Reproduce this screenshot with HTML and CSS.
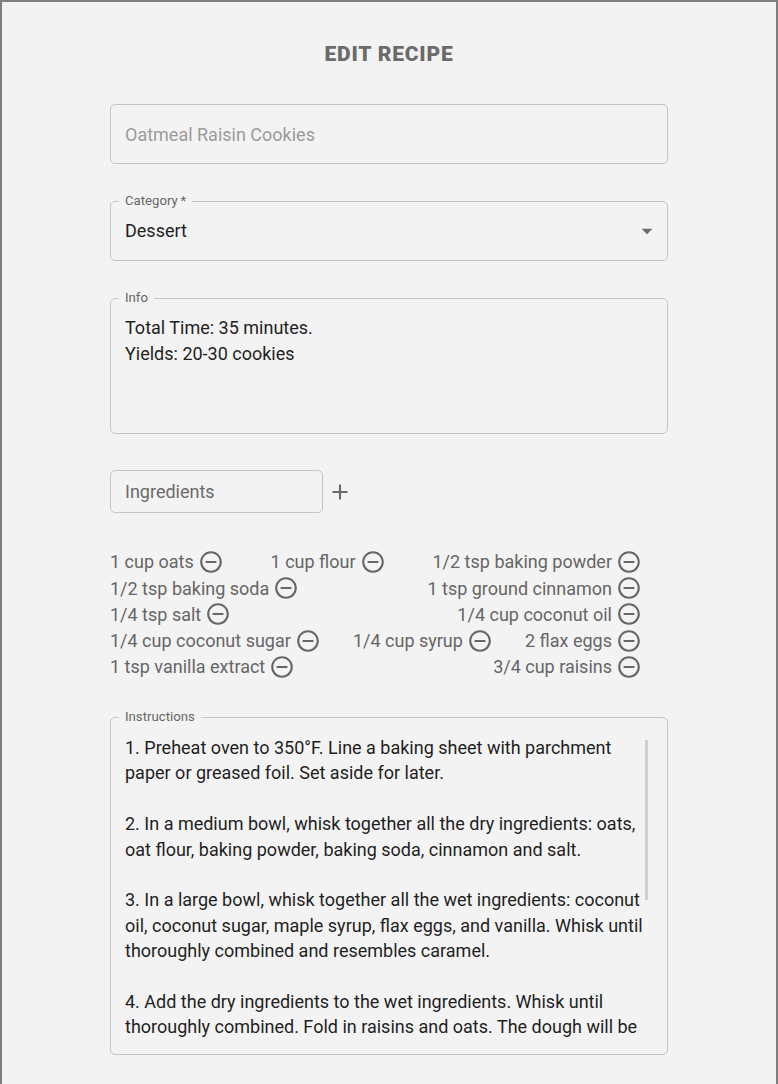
FILE: index.html
```html
<!DOCTYPE html>
<html lang="en">
<head>
<meta charset="utf-8">
<title>Edit Recipe</title>
<link rel="stylesheet" href="styles.css">
</head>
<body>
<div class="page">
  <h1 class="title">EDIT RECIPE</h1>
  <form class="form">
    <div class="field field-plain"><span class="placeholder">Oatmeal Raisin Cookies</span></div>

    <fieldset class="field field-select">
      <legend>Category&thinsp;*</legend>
      <div class="select-row">
        <span class="value">Dessert</span>
        <svg class="arrow" viewBox="0 0 24 24" width="26" height="26"><path d="M7 10l5 5 5-5z"/></svg>
      </div>
    </fieldset>

    <fieldset class="field field-info">
      <legend>Info</legend>
      <div class="multiline">Total Time: 35 minutes.<br>Yields: 20-30 cookies</div>
    </fieldset>

    <div class="ing-add">
      <div class="ing-input">Ingredients</div>
      <svg class="plus" viewBox="0 0 24 24" width="26" height="26"><path d="M19 13h-6v6h-2v-6H5v-2h6V5h2v6h6v2z"/></svg>
    </div>

    <div class="ing-list">
      <div class="ing-row">
        <span class="ing">1 cup oats <svg class="rm" viewBox="0 0 24 24"><path d="M7 11v2h10v-2H7zm5-9C6.48 2 2 6.48 2 12s4.48 10 10 10 10-4.48 10-10S17.52 2 12 2zm0 18c-4.41 0-8-3.59-8-8s3.59-8 8-8 8 3.59 8 8-3.59 8-8 8z"/></svg></span>
        <span class="ing">1 cup flour <svg class="rm" viewBox="0 0 24 24"><path d="M7 11v2h10v-2H7zm5-9C6.48 2 2 6.48 2 12s4.48 10 10 10 10-4.48 10-10S17.52 2 12 2zm0 18c-4.41 0-8-3.59-8-8s3.59-8 8-8 8 3.59 8 8-3.59 8-8 8z"/></svg></span>
        <span class="ing">1/2 tsp baking powder <svg class="rm" viewBox="0 0 24 24"><path d="M7 11v2h10v-2H7zm5-9C6.48 2 2 6.48 2 12s4.48 10 10 10 10-4.48 10-10S17.52 2 12 2zm0 18c-4.41 0-8-3.59-8-8s3.59-8 8-8 8 3.59 8 8-3.59 8-8 8z"/></svg></span>
      </div>
      <div class="ing-row">
        <span class="ing">1/2 tsp baking soda <svg class="rm" viewBox="0 0 24 24"><path d="M7 11v2h10v-2H7zm5-9C6.48 2 2 6.48 2 12s4.48 10 10 10 10-4.48 10-10S17.52 2 12 2zm0 18c-4.41 0-8-3.59-8-8s3.59-8 8-8 8 3.59 8 8-3.59 8-8 8z"/></svg></span>
        <span class="ing">1 tsp ground cinnamon <svg class="rm" viewBox="0 0 24 24"><path d="M7 11v2h10v-2H7zm5-9C6.48 2 2 6.48 2 12s4.48 10 10 10 10-4.48 10-10S17.52 2 12 2zm0 18c-4.41 0-8-3.59-8-8s3.59-8 8-8 8 3.59 8 8-3.59 8-8 8z"/></svg></span>
      </div>
      <div class="ing-row">
        <span class="ing">1/4 tsp salt <svg class="rm" viewBox="0 0 24 24"><path d="M7 11v2h10v-2H7zm5-9C6.48 2 2 6.48 2 12s4.48 10 10 10 10-4.48 10-10S17.52 2 12 2zm0 18c-4.41 0-8-3.59-8-8s3.59-8 8-8 8 3.59 8 8-3.59 8-8 8z"/></svg></span>
        <span class="ing">1/4 cup coconut oil <svg class="rm" viewBox="0 0 24 24"><path d="M7 11v2h10v-2H7zm5-9C6.48 2 2 6.48 2 12s4.48 10 10 10 10-4.48 10-10S17.52 2 12 2zm0 18c-4.41 0-8-3.59-8-8s3.59-8 8-8 8 3.59 8 8-3.59 8-8 8z"/></svg></span>
      </div>
      <div class="ing-row">
        <span class="ing">1/4 cup coconut sugar <svg class="rm" viewBox="0 0 24 24"><path d="M7 11v2h10v-2H7zm5-9C6.48 2 2 6.48 2 12s4.48 10 10 10 10-4.48 10-10S17.52 2 12 2zm0 18c-4.41 0-8-3.59-8-8s3.59-8 8-8 8 3.59 8 8-3.59 8-8 8z"/></svg></span>
        <span class="ing">1/4 cup syrup <svg class="rm" viewBox="0 0 24 24"><path d="M7 11v2h10v-2H7zm5-9C6.48 2 2 6.48 2 12s4.48 10 10 10 10-4.48 10-10S17.52 2 12 2zm0 18c-4.41 0-8-3.59-8-8s3.59-8 8-8 8 3.59 8 8-3.59 8-8 8z"/></svg></span>
        <span class="ing">2 flax eggs <svg class="rm" viewBox="0 0 24 24"><path d="M7 11v2h10v-2H7zm5-9C6.48 2 2 6.48 2 12s4.48 10 10 10 10-4.48 10-10S17.52 2 12 2zm0 18c-4.41 0-8-3.59-8-8s3.59-8 8-8 8 3.59 8 8-3.59 8-8 8z"/></svg></span>
      </div>
      <div class="ing-row">
        <span class="ing">1 tsp vanilla extract <svg class="rm" viewBox="0 0 24 24"><path d="M7 11v2h10v-2H7zm5-9C6.48 2 2 6.48 2 12s4.48 10 10 10 10-4.48 10-10S17.52 2 12 2zm0 18c-4.41 0-8-3.59-8-8s3.59-8 8-8 8 3.59 8 8-3.59 8-8 8z"/></svg></span>
        <span class="ing">3/4 cup raisins <svg class="rm" viewBox="0 0 24 24"><path d="M7 11v2h10v-2H7zm5-9C6.48 2 2 6.48 2 12s4.48 10 10 10 10-4.48 10-10S17.52 2 12 2zm0 18c-4.41 0-8-3.59-8-8s3.59-8 8-8 8 3.59 8 8-3.59 8-8 8z"/></svg></span>
      </div>
    </div>

    <fieldset class="field field-instr">
      <legend>Instructions</legend>
      <div class="scroll">
        <p>1. Preheat oven to 350°F. Line a baking sheet with parchment<br>paper or greased foil. Set aside for later.</p>
        <p>2. In a medium bowl, whisk together all the dry ingredients: oats,<br>oat flour, baking powder, baking soda, cinnamon and salt.</p>
        <p>3. In a large bowl, whisk together all the wet ingredients: coconut<br>oil, coconut sugar, maple syrup, flax eggs, and vanilla. Whisk until<br>thoroughly combined and resembles caramel.</p>
        <p>4. Add the dry ingredients to the wet ingredients. Whisk until<br>thoroughly combined. Fold in raisins and oats. The dough will be</p>
      </div>
      <span class="thumb"></span>
    </fieldset>
  </form>
</div>
</body>
</html>
```
FILE: styles.css
```css
* { box-sizing: border-box; }

html, body {
  margin: 0;
  padding: 0;
  background: #f3f3f3;
}

body {
  font-family: Roboto, "Liberation Sans", Arial, sans-serif;
  color: #232323;
}

.page {
  border: 2px solid #7f7f7f;
  border-bottom: none;
  min-height: 1084px;
  background: #f3f3f3;
  padding-top: 38px;
  padding-bottom: 30px;
}

.title {
  margin: 0;
  text-align: center;
  font-size: 21px;
  line-height: 28px;
  font-weight: 900;
  letter-spacing: 0.8px;
  color: #6b6b6b;
}

.form {
  width: 558px;
  margin: 36px auto 0;
}

.field {
  border: 1px solid #c6c6c6;
  border-radius: 5px;
  margin: 0;
  min-width: 0;
}

.field-plain {
  height: 60px;
  padding: 0 14px;
  display: flex;
  align-items: center;
  font-size: 18px;
}

.placeholder { color: #9b9b9b; }

fieldset.field {
  padding: 0 14px;
  position: relative;
}

fieldset.field legend {
  margin-left: -6px;
  padding: 0 6px;
  font-size: 13.2px;
  line-height: 14px;
  color: #666;
}

.field-select {
  margin-top: 30px !important;
}

.select-row {
  display: flex;
  align-items: center;
  justify-content: space-between;
  padding: 14px 0 20px;
  font-size: 18px;
  line-height: 18px;
}

.select-row .value { color: #1f1f1f; }

.arrow {
  fill: #6b6b6b;
  margin-right: -7px;
  margin-top: -8px;
  margin-bottom: -8px;
}

.field-info {
  margin-top: 30px !important;
}

.multiline {
  padding: 10px 0 17px;
  font-size: 18px;
  line-height: 25.6px;
  height: 128.3px;
  color: #1f1f1f;
}

.ing-add {
  display: flex;
  align-items: center;
  gap: 4px;
  margin-top: 36px;
}

.ing-input {
  width: 213px;
  height: 43px;
  border: 1px solid #c6c6c6;
  border-radius: 5px;
  padding: 0 14px;
  display: flex;
  align-items: center;
  font-size: 18px;
  color: #6b6b6b;
}

.plus { fill: #6b6b6b; }

.ing-list {
  margin-top: 35.5px;
  padding-right: 26px;
}

.ing-row {
  display: flex;
  justify-content: space-between;
  align-items: center;
  height: 26.25px;
}

.ing {
  display: inline-flex;
  align-items: center;
  font-size: 18px;
  color: #666;
  white-space: nowrap;
}

.rm {
  width: 26px;
  height: 26px;
  fill: #666;
  margin-left: 4px;
}

.field-instr {
  margin-top: 30px !important;
}

.scroll {
  margin-top: 11px;
  height: 305px;
  overflow: hidden;
  font-size: 18px;
  line-height: 25.4px;
  color: #1f1f1f;
  margin-bottom: 14px;
}

.scroll p {
  margin: 0 0 25.4px;
  white-space: nowrap;
}

.thumb {
  position: absolute;
  left: 534px;
  top: 16px;
  width: 3px;
  height: 160px;
  background: #cfcfcf;
}
```
